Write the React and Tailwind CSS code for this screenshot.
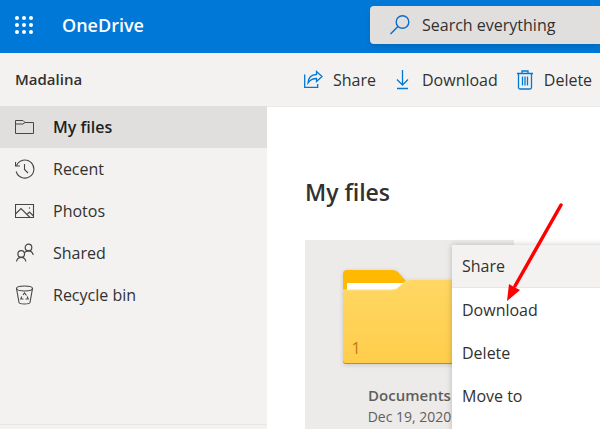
import { useState } from "react";

const iconProps = {
  width: 20,
  height: 20,
  viewBox: "0 0 20 20",
  fill: "none",
  stroke: "currentColor",
  "aria-hidden": true,
};

function FolderIcon() {
  return (
    <svg {...iconProps}>
      <path d="M.5 16.5v-13H8l2 2h8.500v11zM.5 7H8l2-1.500" />
    </svg>
  );
}

function RecentIcon() {
  return (
    <svg {...iconProps} strokeWidth="1.1">
      <path d="M1.600 6.500A9 9 0 1 1 1.200 12.500M.5 3v4H5M9.500 5v5.500L13 14" />
    </svg>
  );
}

function PhotosIcon() {
  return (
    <svg {...iconProps} strokeWidth="1.1">
      <path d="M.5 3.500h18v13H.5zM.5 13L6 7.500l9 9M12 13.500l2.500-2.500 4 4" />
      <circle cx="14.5" cy="7" r=".7" fill="currentColor" stroke="none" />
    </svg>
  );
}

function SharedIcon() {
  return (
    <svg {...iconProps} strokeWidth="1.2">
      <circle cx="13.5" cy="4.5" r="3.3" />
      <circle cx="6.2" cy="11" r="3.3" />
      <path d="M1.500 18.500c.5-2.700 2.200-4.200 4.700-4.200s4.200 1.500 4.700 4.200M9.300 10c.8-1.500 2.200-2.200 4.200-2.200 2.500 0 4.200 1.500 4.700 4.200" />
    </svg>
  );
}

function RecycleIcon() {
  return (
    <svg {...iconProps} strokeWidth="1.1">
      <ellipse cx="9.5" cy="3.5" rx="8" ry="2.5" />
      <path d="M1.500 3.500l2.500 14c.2 1 2.500 1.500 5.500 1.500s5.300-.5 5.500-1.500l2.500-14" />
      <path d="M8 10l1.500-2 2 2.500M6.800 11.500l-1 2.500h2.700M10.500 14h2.700l-1-2.500" />
    </svg>
  );
}

function ShareIcon() {
  return (
    <svg {...iconProps} strokeWidth="1.3">
      <path d="M1.700 4.500v12.800h13V14" />
      <path d="M13.500 1.500l5.500 5-5.500 5v-3c-4 0-6.500 1.500-8.500 4.500.3-5 3.500-8.300 8.500-8.500z" />
    </svg>
  );
}

function DownloadIcon() {
  return (
    <svg {...iconProps} strokeWidth="1.3">
      <path d="M10.500 0v15M5 9.500l5.500 5.500L16 9.500M5 18.500h11" />
    </svg>
  );
}

function DeleteIcon() {
  return (
    <svg {...iconProps} strokeWidth="1.3">
      <path d="M3 3.500h16M8 3.500V1h6v2.500M4.500 3.500v14q0 1.500 1.500 1.500h10q1.500 0 1.500-1.500v-14M8.500 6.500v9M11 6.500v9M13.500 6.500v9" />
    </svg>
  );
}

function SearchIcon() {
  return (
    <svg {...iconProps} strokeWidth="1.4">
      <circle cx="12.5" cy="7" r="6.3" />
      <path d="M8 11.500L.5 19" />
    </svg>
  );
}

function FolderArt() {
  return (
    <svg
      width="134"
      height="94"
      viewBox="0 0 134 94"
      className="drop-shadow-sm"
      aria-hidden="true"
    >
      <defs>
        <linearGradient id="folderFront" x1="0" y1="0" x2="0" y2="1">
          <stop offset="0" stopColor="#ffd763" />
          <stop offset="1" stopColor="#ffcd4b" />
        </linearGradient>
      </defs>
      <path d="M0 4q0-4 4-4h45q4 0 6 2l8 9h67q4 0 4 4v30H0z" fill="#ffb900" />
      <path d="M4 13h57v10H4z" fill="#fff" />
      <path d="M0 88h134v3q0 3-3 3H3q-3 0-3-3z" fill="#e8762c" />
      <path
        d="M0 20h48q5 0 7-2l7-6q2-2 5-2h63q4 0 4 4v76q0 3-3 3H3q-3 0-3-3z"
        fill="url(#folderFront)"
      />
      <path d="M0 20h48q5 0 7-2l7-6q2-2 5-2" fill="none" stroke="#ffe08a" />
    </svg>
  );
}

const navItems = [
  { name: "My files", icon: FolderIcon },
  { name: "Recent", icon: RecentIcon },
  { name: "Photos", icon: PhotosIcon },
  { name: "Shared", icon: SharedIcon },
  { name: "Recycle bin", icon: RecycleIcon },
];

const commands = [
  { name: "Share", icon: ShareIcon },
  { name: "Download", icon: DownloadIcon },
  { name: "Delete", icon: DeleteIcon },
];

const menuItems = ["Share", "Download", "Delete", "Move to"];

function Header() {
  const [query, setQuery] = useState("");

  return (
    <header className="flex h-[53px] shrink-0 items-center bg-[#0078d7] pb-1">
      <div className="flex w-[370px] shrink-0 items-center gap-7 pl-[14px]">
        <button type="button" aria-label="App launcher">
          <svg width="20" height="20" viewBox="0 0 20 20" fill="#fff">
            {[3, 10, 17].map((y) =>
              [3, 10, 17].map((x) => <circle key={`${x}-${y}`} cx={x} cy={y} r="2" />)
            )}
          </svg>
        </button>
        <a href="#" className="text-lg font-semibold text-white">
          OneDrive
        </a>
      </div>
      <label className="flex h-[38px] min-w-0 flex-1 items-center gap-3 rounded-l bg-[#e1dfdd] pl-5 text-[#0f6cc4] shadow-md">
        <SearchIcon />
        <input
          type="text"
          aria-label="Search everything"
          placeholder="Search everything"
          value={query}
          onChange={(e) => setQuery(e.target.value)}
          className="min-w-0 flex-1 bg-transparent text-base text-[#323130] outline-none placeholder:text-[#323130]"
        />
      </label>
    </header>
  );
}

function Sidebar({ active, onSelect }) {
  return (
    <aside className="flex w-[267px] shrink-0 flex-col bg-[#f3f2f1]">
      <h2 className="flex h-[53px] shrink-0 items-center pl-[15px] text-[15px] font-semibold">
        Madalina
      </h2>
      <nav className="flex-1">
        {navItems.map(({ name, icon: Icon }) => (
          <a
            key={name}
            href="#"
            onClick={() => onSelect(name)}
            className={`flex h-[42px] items-center gap-[18px] pl-[15px] ${
              name === active ? "bg-[#e1dfdd] font-semibold text-[#201f1e]" : ""
            }`}
          >
            <span className="text-[#484644]">
              <Icon />
            </span>
            {name}
          </a>
        ))}
      </nav>
      <div className="h-[5px] border-t border-[#e8e6e4]" />
    </aside>
  );
}

function CommandBar() {
  return (
    <div className="flex h-[54px] shrink-0 items-center gap-4 border-b border-[#edebe9] bg-[#f3f2f1] pl-9">
      {commands.map(({ name, icon: Icon }) => (
        <button key={name} type="button" className="flex items-center gap-[10px]">
          <span className="text-[#0078d4]">
            <Icon />
          </span>
          {name}
        </button>
      ))}
    </div>
  );
}

function ContextMenu() {
  return (
    <div
      role="menu"
      className="absolute top-[5px] left-[147px] w-60 bg-white pb-10 shadow-[0_0_6px_rgba(0,0,0,0.22)]"
    >
      {menuItems.map((item) => (
        <button
          key={item}
          type="button"
          role="menuitem"
          className="flex h-[43px] w-full items-center border-[#e8e6e4] pl-[10px] first:border-b first:bg-[#f3f2f1]"
        >
          {item}
        </button>
      ))}
    </div>
  );
}

function FolderTile() {
  return (
    <div className="relative mt-8 w-[209px]">
      <div className="flex flex-col items-center bg-[#edebe9] pt-[30px] pb-6">
        <div className="relative">
          <FolderArt />
          <span className="absolute bottom-1 left-[9px] text-[#c8771e]">1</span>
        </div>
        <p className="mt-5 text-[15px] font-semibold text-[#605e5c]">Documents</p>
        <p className="text-sm text-[#605e5c]">Dec 19, 2020</p>
      </div>
      <ContextMenu />
    </div>
  );
}

function Arrow() {
  return (
    <svg
      width="60"
      height="100"
      viewBox="0 0 60 100"
      className="pointer-events-none absolute top-[95px] left-[237px]"
      aria-hidden="true"
    >
      <path d="M57 3L11 84" stroke="#f00" strokeWidth="3.5" strokeLinecap="round" />
      <path d="M3 99l2-17 5 3 6 3z" fill="#f00" />
    </svg>
  );
}

export default function App() {
  const [active, setActive] = useState("My files");

  return (
    <div className="flex h-screen flex-col overflow-hidden bg-white font-['Open_Sans','Noto_Sans',sans-serif] text-base text-[#323130]">
      <Header />
      <div className="flex min-h-0 flex-1">
        <Sidebar active={active} onSelect={setActive} />
        <div className="flex min-w-0 flex-1 flex-col overflow-hidden">
          <CommandBar />
          <main className="relative min-h-0 flex-1 overflow-hidden pt-[69px] pl-[38px]">
            <h1 className="text-[23px] leading-8 font-semibold">{active}</h1>
            <FolderTile />
            <Arrow />
          </main>
        </div>
      </div>
    </div>
  );
}
